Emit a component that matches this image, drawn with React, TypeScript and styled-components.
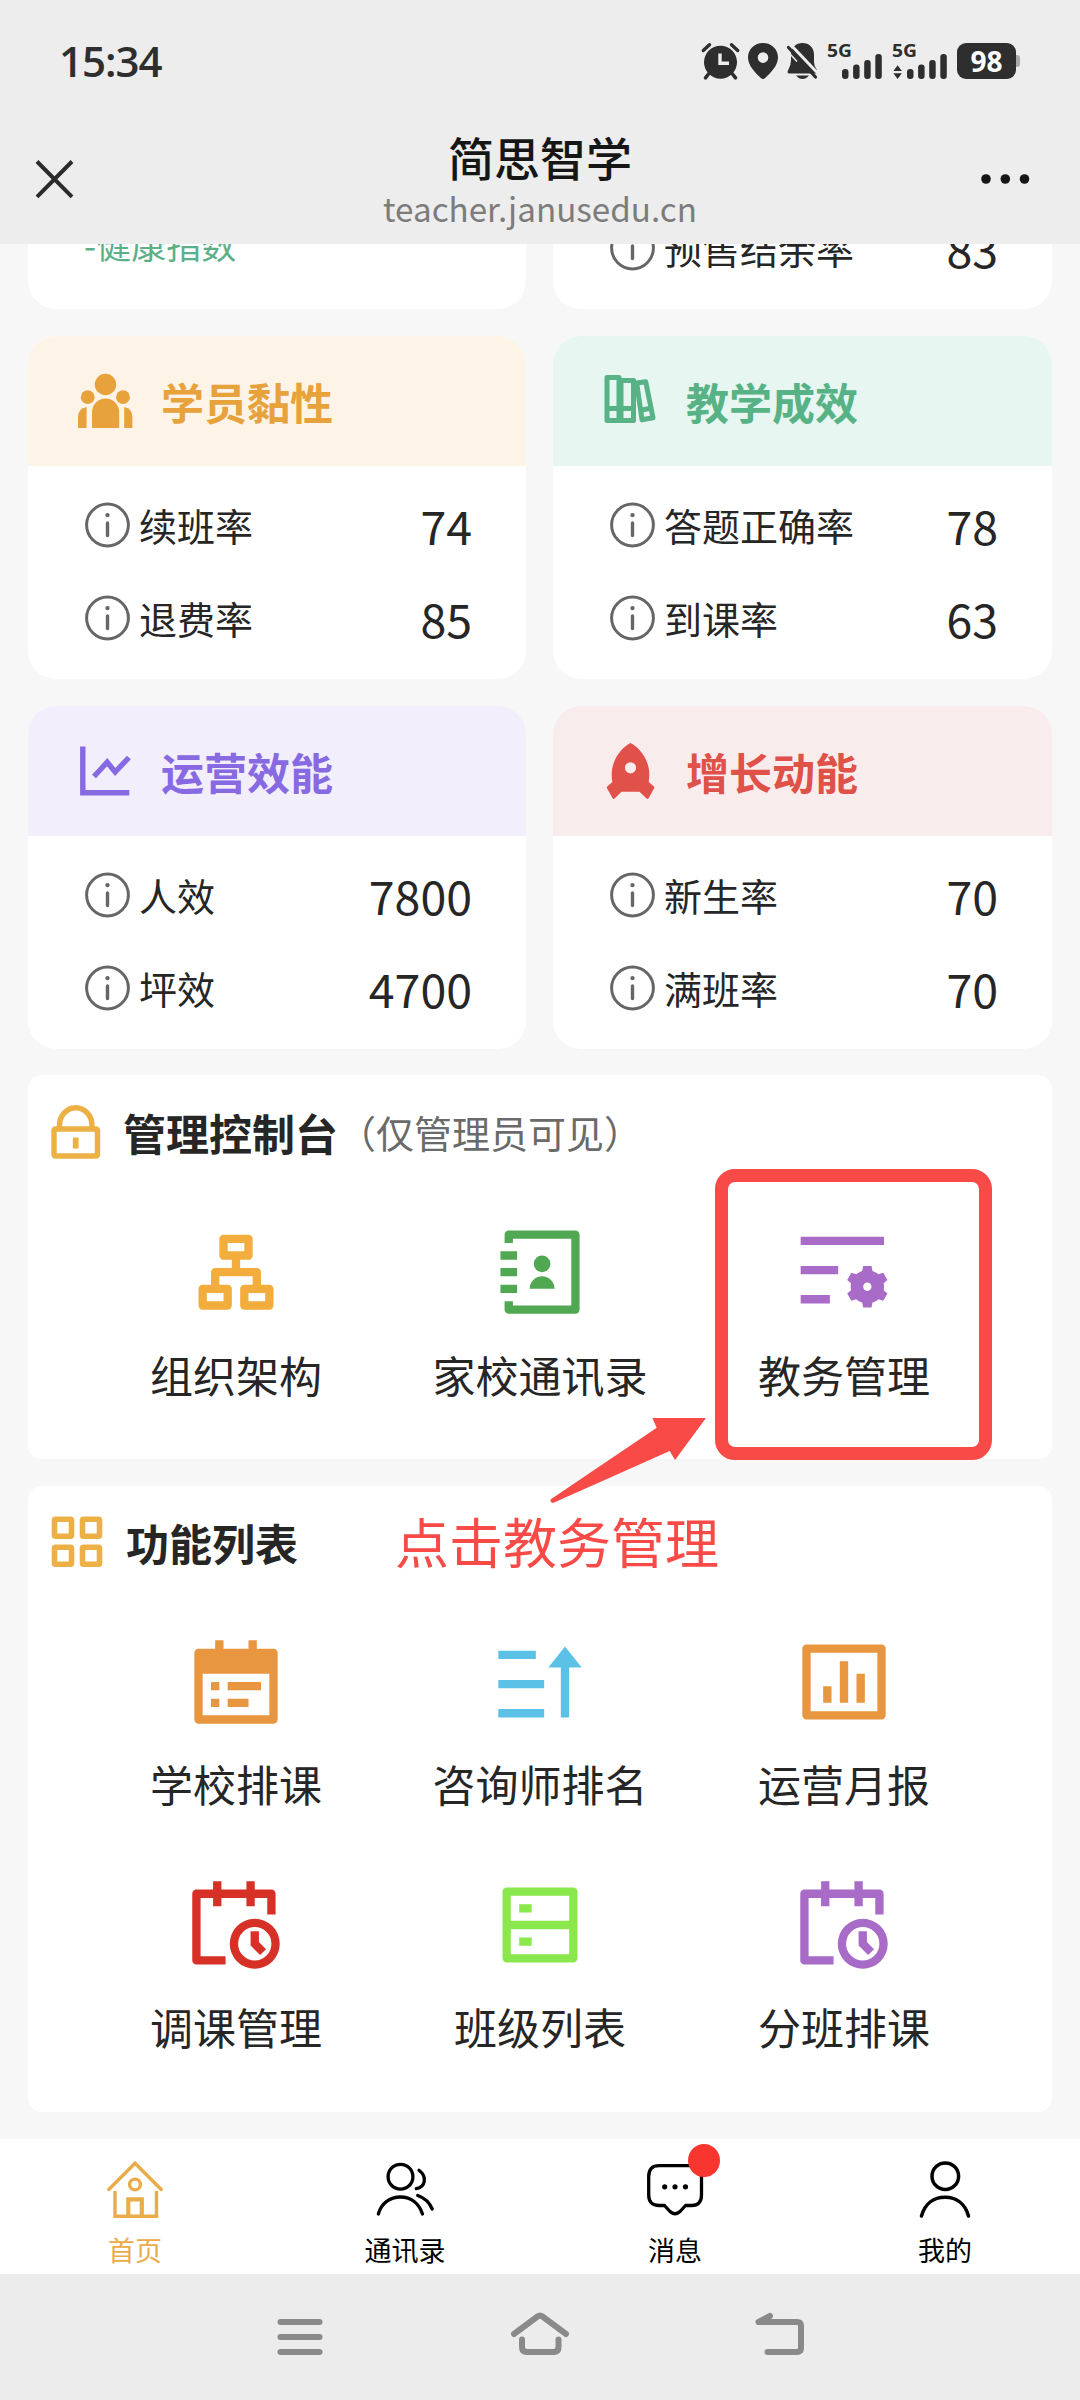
import React from "react";
import styled, { createGlobalStyle } from "styled-components";
import { RiListSettingsFill } from "react-icons/ri";

const GlobalStyle = createGlobalStyle`
  * { box-sizing: border-box; }
  body {
    margin: 0;
    background: #f7f7f7;
    font-family: "Noto Sans CJK SC", "Noto Sans", sans-serif;
    color: #262626;
  }
  svg { display: block; flex: none; overflow: visible; }
`;

const Screen = styled.div`
  position: relative;
  width: 1080px;
  height: 2400px;
  display: flex;
  flex-direction: column;
  overflow: hidden;
  background: #f7f7f7;
`;

/* ---------- top bars ---------- */

const TopArea = styled.header`
  flex: none;
  height: 244px;
  background: #ededed;
`;

const StatusBar = styled.div`
  height: 122px;
  padding: 0 60px 0 59px;
  display: flex;
  align-items: center;
  justify-content: space-between;
`;

const Clock = styled.span`
  font: 600 42px/50px "Open Sans", sans-serif;
  letter-spacing: -1px;
  color: #2e2e2e;
`;

const StatusIcons = styled.div`
  display: flex;
  align-items: center;
  color: #2e2e2e;
`;

const StatusSlot = styled.div<{ $gap: number }>`
  margin-left: ${(p) => p.$gap}px;
`;

const Battery = styled.div`
  display: flex;
  align-items: center;
  margin-left: 10px;
`;

const BatteryBody = styled.div`
  width: 59px;
  height: 36px;
  border-radius: 9px;
  background: #2e2e2e;
  color: #fff;
  font: 700 28px/36px "Open Sans", sans-serif;
  text-align: center;
`;

const BatteryNub = styled.div`
  width: 4px;
  height: 12px;
  border-radius: 0 3px 3px 0;
  background: #a9a9a9;
`;

const NavBar = styled.div`
  height: 122px;
  padding: 0 50px 8px 35px;
  display: grid;
  grid-template-columns: 100px 1fr 85px;
  align-items: center;
`;

const NavTitle = styled.div`
  display: flex;
  flex-direction: column;
  align-items: center;
`;

const TitleText = styled.div`
  font-size: 46px;
  line-height: 58px;
  font-weight: 500;
  color: #161616;
`;

const UrlText = styled.div`
  font-size: 33.2px;
  line-height: 46px;
  color: #7c7c7c;
`;

const NavRight = styled.div`
  display: flex;
  justify-content: flex-end;
`;

/* ---------- scrolling content ---------- */

const Content = styled.main`
  flex: none;
  height: 1895px;
  padding: 0 28px;
  overflow: hidden;
`;

const ScrolledRow = styled.div`
  height: 65px;
  margin-bottom: 27px;
  overflow: hidden;
  display: flex;
  align-items: flex-end;
`;

const CardRow = styled.div<{ $bottom?: number }>`
  width: 100%;
  display: grid;
  grid-template-columns: 498px 499px;
  column-gap: 27px;
  margin-bottom: ${(p) => p.$bottom ?? 0}px;
`;

const Card = styled.section`
  height: 343px;
  border-radius: 28px;
  overflow: hidden;
  background: #fff;
`;

const CardHead = styled.div<{ $bg: string; $fg: string }>`
  height: 130px;
  padding: 0 0 1px 50px;
  display: flex;
  align-items: center;
  gap: 28px;
  background: ${(p) => p.$bg};
  color: ${(p) => p.$fg};
`;

const CardTitle = styled.h2`
  margin: 0;
  font-size: 43px;
  line-height: 60px;
  font-weight: 700;
`;

const Metrics = styled.div`
  padding: 13px 54px 0 57px;
`;

const Metric = styled.div`
  height: 93px;
  display: flex;
  align-items: center;
`;

const MetricName = styled.span`
  flex: 1;
  margin-left: 9px;
  padding-bottom: 1px;
  font-size: 38px;
  line-height: 56px;
`;

const MetricValue = styled.span`
  padding-bottom: 2px;
  font-size: 46.5px;
  line-height: 60px;
`;

const HealthCard = styled(Card)`
  display: flex;
  align-items: flex-end;
  padding: 0 0 40px 56px;
`;

const HealthText = styled.span`
  font-size: 35px;
  line-height: 50px;
  color: #5cb088;
`;

const Panel = styled.section<{ $height: number; $bottom: number }>`
  height: ${(p) => p.$height}px;
  margin-bottom: ${(p) => p.$bottom}px;
  border-radius: 14px;
  background: #fff;
`;

const PanelHead = styled.div<{ $height: number }>`
  height: ${(p) => p.$height}px;
  padding-left: 23px;
  display: flex;
  align-items: center;
  color: #edb045;
`;

const PanelIcon = styled.div<{ $width: number }>`
  width: ${(p) => p.$width}px;
`;

const PanelTitle = styled.h2`
  margin: 0;
  font-size: 43px;
  line-height: 60px;
  font-weight: 700;
  color: #262626;
`;

const PanelNote = styled.span`
  font-size: 38px;
  line-height: 56px;
  color: #6a6a6a;
`;

const TileGrid = styled.div`
  padding: 34px 56px 0;
  display: grid;
  grid-template-columns: repeat(3, 1fr);
  grid-auto-rows: 243px;
`;

const Tile = styled.div<{ $color: string }>`
  display: flex;
  flex-direction: column;
  align-items: center;
  gap: 21px;
  color: ${(p) => p.$color};
`;

const TileLabel = styled.span`
  font-size: 43px;
  line-height: 60px;
  color: #262626;
  white-space: nowrap;
`;

/* ---------- bottom bars ---------- */

const TabBar = styled.nav`
  flex: none;
  height: 135px;
  display: grid;
  grid-template-columns: repeat(4, 1fr);
  background: #fff;
`;

const Tab = styled.div<{ $active?: boolean }>`
  display: flex;
  flex-direction: column;
  align-items: center;
  padding-top: 20px;
  color: ${(p) => (p.$active ? "#eaac49" : "#000")};
`;

const TabIcon = styled.div`
  position: relative;
  width: 60px;
  height: 60px;
`;

const Badge = styled.span`
  position: absolute;
  left: 43px;
  top: -15px;
  width: 32px;
  height: 33px;
  border-radius: 50%;
  background: #f93530;
`;

const TabLabel = styled.span`
  margin-top: 11px;
  font-size: 27px;
  line-height: 40px;
`;

const SystemNav = styled.footer`
  flex: 1;
  padding: 0 180px 0;
  display: grid;
  grid-template-columns: repeat(3, 1fr);
  justify-items: center;
  align-items: center;
  background: #ececec;
  color: #8a8a8a;
`;

/* ---------- tutorial annotation, laid over the page ---------- */

const HighlightBox = styled.div`
  position: absolute;
  left: 715px;
  top: 1169px;
  width: 277px;
  height: 291px;
  border: 13px solid #f84b47;
  border-radius: 20px;
`;

const PointerArrow = styled.svg`
  position: absolute;
  left: 548px;
  top: 1416px;
`;

const HintText = styled.div`
  position: absolute;
  left: 395px;
  top: 1502px;
  font-size: 54px;
  line-height: 78px;
  color: #f84b47;
  white-space: nowrap;
`;

/* ---------- icons ---------- */

const InfoIcon = () => (
  <svg width="45" height="45" viewBox="0 0 45 45" fill="none" stroke="#666">
    <circle cx="22.5" cy="22" r="20.9" strokeWidth="3" />
    <circle cx="22.5" cy="12.1" r="2.2" fill="#666" stroke="none" />
    <path d="M22.5 20v12.5" strokeWidth="3.4" strokeLinecap="round" />
  </svg>
);

const PeopleIcon = () => (
  <svg width="55" height="56" viewBox="0 0 55 56" fill="currentColor">
    <circle cx="27.5" cy="11.5" r="10.7" />
    <circle cx="9.7" cy="24.2" r="6.9" />
    <circle cx="45" cy="24.2" r="6.9" />
    <path d="M14 55V39.5a13.6 14 0 0 1 27.2 0V55z" />
    <path d="M0 55V44q0-8.5 8.6-10V55z" />
    <path d="M54.4 55V44q0-8.5-8.2-10V55z" />
  </svg>
);

const BooksIcon = () => (
  <svg width="55" height="56" viewBox="1 1 55 56" fill="none" stroke="currentColor" strokeLinejoin="round">
    <g strokeWidth="5">
      <path d="M5 5.500h12v43H5zM5 36.500h12" />
      <path d="M19 8.500h12.500v40H19z" />
      <path d="M17 36.500h15" />
      <path d="M34.700 11l9-1.300 7.300 36.100-11 1.900zM39.400 38l9.600-1.800" />
    </g>
    <path d="M17.800 8v40" strokeWidth="5.500" />
  </svg>
);

const TrendIcon = () => (
  <svg width="55" height="56" viewBox="0 0 55 56" fill="none" stroke="currentColor" strokeWidth="5.4">
    <path d="M4.8 3.5v46.3h46.5" />
    <path d="M16 33.5L29.2 19.2l8 9.8L50.9 14.5" />
  </svg>
);

const RocketIcon = () => (
  <svg width="55" height="56" viewBox="0 0 55 56" fill="currentColor" fillRule="evenodd">
    <path d="M27.5 0C35 3.500 46.300 15.500 46.300 31.500c0 2.400-.2 4.600-.6 7.500l5.200 4.600q.7.8.2 1.700l-5.500 10q-1 1.200-2 .2L36.500 48.800h-18L11.600 55.500q-1.100.9-2-.2L4 45.200q-.6-.9.2-1.700L9.400 39C8.900 36 8.700 34 8.700 31.500 8.700 15.500 20 3.500 27.500 0zM27.500 19.200a5.600 5.600 0 1 0 0 11.200 5.600 5.600 0 0 0 0-11.200z" />
  </svg>
);

const LockIcon = () => (
  <svg width="50" height="54" viewBox="0 0 50 54" fill="none" stroke="currentColor" strokeWidth="5.4">
    <rect x="3" y="24" width="43.5" height="27" rx="1.5" />
    <path d="M8.500 24v-3.500a16 17.500 0 0 1 32.500 0V24" />
    <path d="M24.700 32.500v11" strokeWidth="5.8" />
  </svg>
);

const GridIcon = () => (
  <svg width="52" height="52" viewBox="0 0 52 52" fill="none" stroke="currentColor" strokeWidth="5.6">
    <rect x="3.5" y="3.3" width="17" height="17" rx="1" />
    <rect x="31.5" y="3.3" width="17" height="17" rx="1" />
    <rect x="3.5" y="31.3" width="17" height="17" rx="1" />
    <rect x="31.5" y="31.3" width="17" height="17" rx="1" />
  </svg>
);

const Glyph = ({ box = "0 0 24 24", d }: { box?: string; d: string }) => (
  <svg width="100" height="100" viewBox={box} fill="currentColor" fillRule="evenodd">
    <path d={d} />
  </svg>
);

const ORG =
  "M15 3a1 1 0 0 1 1 1v4a1 1 0 0 1-1 1h-2v2h4a1 1 0 0 1 1 1v3h2a1 1 0 0 1 1 1v4a1 1 0 0 1-1 1h-6a1 1 0 0 1-1-1v-4a1 1 0 0 1 1-1h2v-2H8v2h2a1 1 0 0 1 1 1v4a1 1 0 0 1-1 1H4a1 1 0 0 1-1-1v-4a1 1 0 0 1 1-1h2v-3a1 1 0 0 1 1-1h4V9H9a1 1 0 0 1-1-1V4a1 1 0 0 1 1-1zM9 17H5v2h4zm10 0h-4v2h4zM14 5h-4v2h4z";
const CONTACTS_BOOK =
  "M20 2a1 1 0 0 1 1 1v18a1 1 0 0 1-1 1H4a1 1 0 0 1-1-1v-2h2v1h14V4H5v1H3V3a1 1 0 0 1 1-1zM2 7h4v2H2zM2 11h4v2H2zM2 15h4v2H2zM9 16a3 3 0 0 1 6 0zM12 12a2 2 0 1 1 0-4 2 2 0 0 1 0 4z";
const CALENDAR_LIST =
  "M17 1v2h4a1 1 0 0 1 1 1v16a1 1 0 0 1-1 1H3a1 1 0 0 1-1-1V4a1 1 0 0 1 1-1h4V1h2v2h6V1zM20 9H4v10h16zM8 15v2H6v-2zm7 0v2h-5v-2zM8 11v2H6v-2zm10 0v2h-8v-2z";
const SORT_ASC = "M19 3l4 5h-3v12h-2V8h-3zM14 18v2H3v-2zM14 11v2H3v-2zM12 4v2H3V4z";
const BAR_CHART =
  "M3 3h18a1 1 0 0 1 1 1v16a1 1 0 0 1-1 1H3a1 1 0 0 1-1-1V4a1 1 0 0 1 1-1zM4 5v14h16V5zM7 13h2v4H7zM11 7h2v10h-2zM15 10h2v7h-2z";
const CALENDAR_CLOCK =
  "M7 3V1h2v2h6V1h2v2h4a1 1 0 0 1 1 1v5h-2V5h-3v2h-2V5H9v2H7V5H4v14h6v2H3a1 1 0 0 1-1-1V4a1 1 0 0 1 1-1zM17 12a4 4 0 1 0 0 8 4 4 0 0 0 0-8zM11 16a6 6 0 1 1 12 0 6 6 0 0 1-12 0zM18 13v2.586l1.707 1.707-1.414 1.414L16 16.414V13z";
const SERVER =
  "M4 3h16a1 1 0 0 1 1 1v16a1 1 0 0 1-1 1H4a1 1 0 0 1-1-1V4a1 1 0 0 1 1-1zM5 5v6h14V5zM5 13v6h14v-6zM7 15h3v2H7zM7 7h3v2H7z";

const signalBars = [10, 14.5, 19, 25];

const Signal = ({ data }: { data?: boolean }) => (
  <svg width="54" height="36" viewBox="0 0 54 36" fill="currentColor">
    <text x="-1" y="14" fontFamily="Open Sans" fontWeight="700" fontSize="18.5" textLength="25" lengthAdjust="spacingAndGlyphs">
      5G
    </text>
    {signalBars.map((h, i) => (
      <rect key={h} x={14 + i * 11.1} y={36 - h} width="6.5" height={h} rx="3" />
    ))}
    {data && <path d="M4.600 22.300L8.900 28H.4zM4.600 36L.4 30.300h8.500z" />}
  </svg>
);

const AlarmIcon = () => (
  <svg width="37" height="36" viewBox="0 0 37 36" fill="none" stroke="currentColor">
    <circle cx="18.5" cy="19.2" r="16.5" fill="currentColor" stroke="none" />
    <path d="M1.300 7.500L7.500 1.700M35.700 7.500L29.500 1.700" strokeWidth="3.4" strokeLinecap="round" />
    <path d="M6.500 31l-3 3.800M30.500 31l3 3.800" strokeWidth="3.6" strokeLinecap="round" />
    <path d="M18 10.500v9.700h9" stroke="#ededed" strokeWidth="3.4" />
  </svg>
);

const PinIcon = () => (
  <svg width="30" height="36" viewBox="0 0 30 36" fill="currentColor" fillRule="evenodd">
    <path d="M15 0c8.500 0 15 6.300 15 14.500 0 8.500-7.800 15.500-12.800 20.500q-2.200 2-4.400 0C7.800 30 0 23 0 14.500 0 6.300 6.500 0 15 0zM15 9.300a5.300 5.300 0 1 0 0 10.600 5.300 5.300 0 0 0 0-10.600z" />
  </svg>
);

const MutedBellIcon = () => (
  <svg width="31" height="36" viewBox="0 0 31 36">
    <path
      d="M15.500 0C22 0 27 4.500 27 11.500v7.500q0 4 2.700 7.500 1.500 4-1 4H2.300q-2.600 0-1.300-3Q4 22 4 17.500v-6C4 4.500 9 0 15.500 0z"
      fill="currentColor"
    />
    <path d="M9 32.500h13q-3 3.500-6.500 3.500T9 32.500z" fill="currentColor" />
    <path d="M3 1L32 31.500" stroke="#ededed" strokeWidth="3" />
    <path d="M1.500 4.500L28.500 34" stroke="currentColor" strokeWidth="3.2" strokeLinecap="round" />
    <path d="M-1.500 6L10 18.600" stroke="#ededed" strokeWidth="1.5" />
  </svg>
);

const HomeTabIcon = () => (
  <svg width="60" height="60" viewBox="0 0 60 60" fill="none" stroke="currentColor" strokeWidth="3.4">
    <path d="M3.800 30.500L30 4.200l26.200 26.300" strokeLinecap="round" />
    <path d="M10 32v25.300h41.500V32" />
    <circle cx="30" cy="25.5" r="5.4" />
    <path d="M23.300 57V40.300h13.500V57" strokeWidth="4.2" />
  </svg>
);

const ContactsTabIcon = () => (
  <svg width="60" height="60" viewBox="0 0 60 60" fill="none" stroke="currentColor" strokeWidth="3.3" strokeLinecap="round">
    <circle cx="25.5" cy="17.7" r="12.4" />
    <path d="M3.300 55C6.500 44 15 38 25.500 38S44 44.500 47.500 55" />
    <path d="M44 11.200c8.500 6.500 6.500 17-2.700 18.500M42.700 36.500C50 39 54.500 43.500 57.200 50" />
  </svg>
);

const MessageTabIcon = () => (
  <svg width="60" height="60" viewBox="0 0 60 60" fill="none" stroke="currentColor" strokeWidth="3.3">
    <path
      d="M14 6.700h31.500q11 0 11 11V36q0 10.500-10 10.500h-6L35 52.500q-5 4.500-10 0l-5.500-6H14q-10.300 0-10.300-10.500V17.700q0-11 10.300-11z"
      strokeLinejoin="round"
    />
    <g fill="currentColor" stroke="none">
      <circle cx="19.7" cy="27.8" r="2.6" />
      <circle cx="30" cy="27.8" r="2.6" />
      <circle cx="40.5" cy="27.8" r="2.6" />
    </g>
  </svg>
);

const MeTabIcon = () => (
  <svg width="60" height="60" viewBox="0 0 60 60" fill="none" stroke="currentColor" strokeWidth="3.5" strokeLinecap="round">
    <circle cx="30.3" cy="17.2" r="13.3" />
    <path d="M6.500 57C10 44.500 19 38.300 30 38.300S50 44.500 53.500 57" />
  </svg>
);

/* ---------- page data ---------- */

type MetricItem = [name: string, value: string];

const cards: { title: string; bg: string; fg: string; icon: React.ReactNode; metrics: MetricItem[] }[] = [
  { title: "学员黏性", bg: "#fdf4e7", fg: "#e8a23c", icon: <PeopleIcon />, metrics: [["续班率", "74"], ["退费率", "85"]] },
  { title: "教学成效", bg: "#e7f6f1", fg: "#57b386", icon: <BooksIcon />, metrics: [["答题正确率", "78"], ["到课率", "63"]] },
  { title: "运营效能", bg: "#f2eefb", fg: "#876ae2", icon: <TrendIcon />, metrics: [["人效", "7800"], ["坪效", "4700"]] },
  { title: "增长动能", bg: "#f9eced", fg: "#df5149", icon: <RocketIcon />, metrics: [["新生率", "70"], ["满班率", "70"]] },
];

const adminTiles = [
  { label: "组织架构", color: "#f2ad3d", icon: <Glyph box="0 0.2 24 24" d={ORG} /> },
  { label: "家校通讯录", color: "#50a852", icon: <Glyph box="-0.5 0.2 24 24" d={CONTACTS_BOOK} /> },
  { label: "教务管理", color: "#a86cc8", icon: <RiListSettingsFill size={100} viewBox="0.4 0.7 24 24" /> },
];

const featureTiles = [
  { label: "学校排课", color: "#e8963f", icon: <Glyph box="0 -1 24 24" d={CALENDAR_LIST} /> },
  { label: "咨询师排名", color: "#5bc1e6", icon: <Glyph box="1 -0.5 24 24" d={SORT_ASC} /> },
  { label: "运营月报", color: "#e8963f", icon: <Glyph d={BAR_CHART} /> },
  { label: "调课管理", color: "#d73027", icon: <Glyph box="0.5 -0.5 24 24" d={CALENDAR_CLOCK} /> },
  { label: "班级列表", color: "#8be84c", icon: <Glyph d={SERVER} /> },
  { label: "分班排课", color: "#a86cc8", icon: <Glyph box="0.5 -0.5 24 24" d={CALENDAR_CLOCK} /> },
];

const MetricRow = ({ item }: { item: MetricItem }) => (
  <Metric>
    <InfoIcon />
    <MetricName>{item[0]}</MetricName>
    <MetricValue>{item[1]}</MetricValue>
  </Metric>
);

const MetricCard = ({ card }: { card: (typeof cards)[number] }) => (
  <Card>
    <CardHead $bg={card.bg} $fg={card.fg}>
      {card.icon}
      <CardTitle>{card.title}</CardTitle>
    </CardHead>
    <Metrics>
      {card.metrics.map((m) => (
        <MetricRow key={m[0]} item={m} />
      ))}
    </Metrics>
  </Card>
);

const Tiles = ({ items }: { items: typeof featureTiles }) => (
  <TileGrid>
    {items.map((t) => (
      <Tile key={t.label} $color={t.color}>
        {t.icon}
        <TileLabel>{t.label}</TileLabel>
      </Tile>
    ))}
  </TileGrid>
);

export default function App() {
  return (
    <Screen>
      <GlobalStyle />
      <TopArea>
        <StatusBar>
          <Clock>15:34</Clock>
          <StatusIcons>
            <AlarmIcon />
            <StatusSlot $gap={9}><PinIcon /></StatusSlot>
            <StatusSlot $gap={9}><MutedBellIcon /></StatusSlot>
            <StatusSlot $gap={10}><Signal /></StatusSlot>
            <StatusSlot $gap={11}><Signal data /></StatusSlot>
            <Battery>
              <BatteryBody>98</BatteryBody>
              <BatteryNub />
            </Battery>
          </StatusIcons>
        </StatusBar>
        <NavBar>
          <svg width="38" height="38" viewBox="0 0 38 38" stroke="#2b2b2b" strokeWidth="4">
            <path d="M2 1.500L37 36.800M37 1.500L2 36.800" />
          </svg>
          <NavTitle>
            <TitleText>简思智学</TitleText>
            <UrlText>teacher.janusedu.cn</UrlText>
          </NavTitle>
          <NavRight>
            <svg width="49" height="10" viewBox="0 0 49 10" fill="#161616">
              <circle cx="5" cy="5" r="4.8" />
              <circle cx="24.3" cy="5" r="4.8" />
              <circle cx="43.5" cy="5" r="4.8" />
            </svg>
          </NavRight>
        </NavBar>
      </TopArea>

      <Content>
        <ScrolledRow>
          <CardRow>
            <HealthCard>
              <HealthText>-健康指数</HealthText>
            </HealthCard>
            <Card>
              <CardHead $bg="#fff" $fg="#262626" />
              <Metrics>
                <Metric />
                <MetricRow item={["预售结余率", "83"]} />
              </Metrics>
            </Card>
          </CardRow>
        </ScrolledRow>
        <CardRow $bottom={27}>
          <MetricCard card={cards[0]} />
          <MetricCard card={cards[1]} />
        </CardRow>
        <CardRow $bottom={26}>
          <MetricCard card={cards[2]} />
          <MetricCard card={cards[3]} />
        </CardRow>

        <Panel $height={384} $bottom={27}>
          <PanelHead $height={114}>
            <PanelIcon $width={72}><LockIcon /></PanelIcon>
            <PanelTitle>管理控制台</PanelTitle>
            <PanelNote>（仅管理员可见）</PanelNote>
          </PanelHead>
          <Tiles items={adminTiles} />
        </Panel>

        <Panel $height={626} $bottom={27}>
          <PanelHead $height={112}>
            <PanelIcon $width={75}><GridIcon /></PanelIcon>
            <PanelTitle>功能列表</PanelTitle>
          </PanelHead>
          <Tiles items={featureTiles} />
        </Panel>
      </Content>

      <TabBar>
        <Tab $active>
          <TabIcon><HomeTabIcon /></TabIcon>
          <TabLabel>首页</TabLabel>
        </Tab>
        <Tab>
          <TabIcon><ContactsTabIcon /></TabIcon>
          <TabLabel>通讯录</TabLabel>
        </Tab>
        <Tab>
          <TabIcon>
            <MessageTabIcon />
            <Badge />
          </TabIcon>
          <TabLabel>消息</TabLabel>
        </Tab>
        <Tab>
          <TabIcon><MeTabIcon /></TabIcon>
          <TabLabel>我的</TabLabel>
        </Tab>
      </TabBar>

      <SystemNav>
        <svg width="60" height="60" viewBox="0 0 60 60" fill="none" stroke="currentColor" strokeWidth="6" strokeLinecap="round">
          <path d="M10.500 15h39M10.500 30h39M10.500 45h39" />
        </svg>
        <svg width="60" height="60" viewBox="0 0 60 60" fill="none" stroke="currentColor" strokeWidth="6" strokeLinecap="round">
          <path d="M4 27L27.500 9.500q2.500-1.800 5 0L56 27" />
          <path d="M12 32.500V40q0 5 5 5h26.500q5 0 5-5v-7.500" />
        </svg>
        <svg width="60" height="60" viewBox="0 0 60 60" fill="none" stroke="currentColor" strokeWidth="6" strokeLinecap="round" strokeLinejoin="round">
          <path d="M20 9L8.500 15H47q4 0 4 4v22q0 4-4 4H17.500" />
        </svg>
      </SystemNav>

      <HighlightBox />
      <PointerArrow width="160" height="90" viewBox="0 0 160 90" fill="#f84b47">
        <path d="M158 2L127 44l-5.300-9L5 87q-3-.5-2.500-3.500L108.700 11.700 104.300 2z" />
      </PointerArrow>
      <HintText>点击教务管理</HintText>
    </Screen>
  );
}
